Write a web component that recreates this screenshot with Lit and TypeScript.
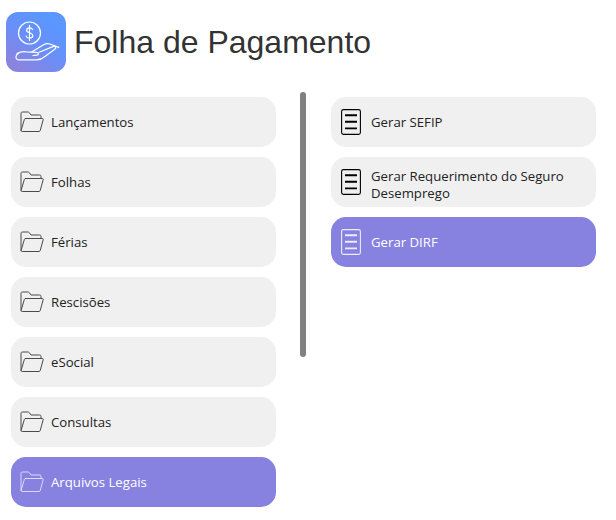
import { LitElement, html, css, svg } from "lit";
import { customElement } from "lit/decorators.js";

const left = ["Lançamentos", "Folhas", "Férias", "Rescisões", "eSocial", "Consultas", "Arquivos Legais"];
const right = ["Gerar SEFIP", "Gerar Requerimento do Seguro Desemprego", "Gerar DIRF"];

const folder = svg`<svg class="ic" width="24" height="22" viewBox="0 0 24 22" fill="none" stroke="currentColor" stroke-width="1" stroke-linejoin="round" stroke-linecap="round">
  <path d="M1 19.5V2.4C1 1.4 1.5 1 2.4 1H7.8C8.6 1 9 1.3 9.5 1.9L11 4H19.6C20.6 4 21 4.5 21 5.4V7.4"/>
  <path d="M5.6 7.5H22.4C23 7.5 23.4 7.9 23.2 8.6L20.2 19.6C20 20.2 19.6 20.5 19 20.5H2.2C1.3 20.5 0.9 20 1.2 19.2L4.4 8.3C4.6 7.8 5 7.5 5.6 7.5Z"/>
</svg>`;

const doc = svg`<svg class="ic" width="20" height="26" viewBox="0 0 20 26" fill="none" stroke="currentColor">
  <rect x="0.6" y="0.6" width="18.8" height="24.8" rx="1.8" stroke-width="1.1"/>
  <path d="M4 6.2H16M4 12.8H16M4 19.4H16" stroke-width="1.9"/>
</svg>`;

const hand = svg`<svg width="60" height="60" viewBox="0 0 60 60" fill="none" stroke="#fff" stroke-width="1.2" stroke-linecap="round" stroke-linejoin="round">
  <circle cx="23.5" cy="21" r="11"/>
  <path d="M26.6 17.6C26 16.4 24.9 15.8 23.5 15.8C21.8 15.8 20.6 16.8 20.6 18.2C20.6 21.4 26.8 20.2 26.8 23.6C26.8 25.2 25.3 26.2 23.5 26.2C21.9 26.2 20.6 25.4 20.1 24.1M23.5 13.4V28.4"/>
  <path d="M11 41.6C14 39.8 17 39.4 20 39.8L30.5 40.4C33 40.6 33 43 30.5 43.2L27 43.5"/>
  <path d="M26 39.8L38 32.6C40 31.4 42 31.3 44 32L52.8 35.4"/>
  <path d="M33 40.2L47.5 34.4C49.6 33.8 50.6 35.8 49 37L38.6 44.8C36 47 34 47.9 31 47.9H13.4C10.6 47.9 9.8 46 10 44.6C10.2 43.2 11 42 12.6 41.2"/>
</svg>`;

@customElement("app-root")
export class AppRoot extends LitElement {
  static styles = css`
    :host { display: block; width: 616px; height: 520px; background: #fff; font-family: "Open Sans", "Noto Sans", sans-serif; overflow: hidden; }
    .head { display: flex; align-items: center; gap: 8px; padding: 12px 0 0 6px; height: 60px; }
    .logo { width: 60px; height: 60px; border-radius: 12px; display: flex; background: linear-gradient(35deg, #9580d6 0%, #7c88ea 28%, #6690fa 52%, #5c96ff 80%); }
    h1 { margin: 0; font: 400 32px "Liberation Sans", Arial, sans-serif; color: #333; }
    .body { display: flex; padding: 20px 0 0 11px; align-items: flex-start; }
    .col { width: 265px; display: flex; flex-direction: column; gap: 10px; padding-top: 5px; }
    .bar { width: 6px; height: 265px; background: #808080; border-radius: 3px; margin: 0 25px 0 24px; flex: none; }
    .item { height: 50px; box-sizing: border-box; border-radius: 15px; background: #f0f0f0; color: #222; display: flex; align-items: center; padding-left: 9px; gap: 7px; font-size: 13.2px; line-height: 17px; }
    .item .ic { color: #4a4a4a; }
    .item.on { background: #8781e0; color: #fff; }
    .item.on .ic { color: rgba(255, 255, 255, .7); }
    .right .item { padding-left: 10px; gap: 10px; }
    .right .item .ic { color: #000; }
    .right .item.on .ic { color: rgba(255, 255, 255, .85); }
    .two { padding-top: 5px; }
    .ic { flex: none; }
  `;
  render() {
    return html`
      <div class="head"><div class="logo">${hand}</div><h1>Folha de Pagamento</h1></div>
      <div class="body">
        <div class="col">${left.map((t, i) => html`<div class="item ${i === 6 ? "on" : ""}">${folder}<span>${t}</span></div>`)}</div>
        <div class="bar"></div>
        <div class="col right">${right.map((t, i) => html`<div class="item ${i === 2 ? "on" : ""}">${doc}<span class="${t.length > 25 ? "two" : ""}">${t}</span></div>`)}</div>
      </div>`;
  }
}
